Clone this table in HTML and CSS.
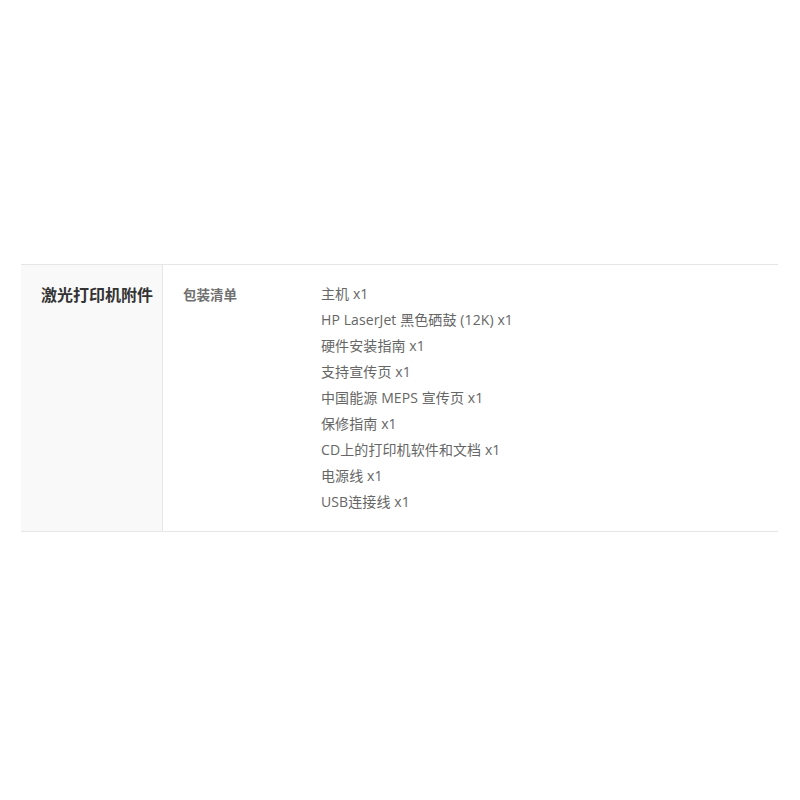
FILE: index.html
```html
<!DOCTYPE html>
<html>
<head>
<meta charset="utf-8">
<link rel="stylesheet" href="styles.css">
</head>
<body>
<div class="spec">
  <div class="group">激光打印机附件</div>
  <div class="body">
    <div class="label">包装清单</div>
    <ul class="items">
      <li>主机 x1</li>
      <li>HP LaserJet 黑色硒鼓 (12K) x1</li>
      <li>硬件安装指南 x1</li>
      <li>支持宣传页 x1</li>
      <li>中国能源 MEPS 宣传页 x1</li>
      <li>保修指南 x1</li>
      <li>CD上的打印机软件和文档 x1</li>
      <li>电源线 x1</li>
      <li>USB连接线 x1</li>
    </ul>
  </div>
</div>
</body>
</html>
```

FILE: styles.css
```css
html, body {
  margin: 0;
  padding: 0;
  background: #fff;
}
body {
  font-family: "Open Sans", "Noto Sans CJK SC", sans-serif;
}
.spec {
  margin: 264px 0 0 21px;
  width: 757px;
  display: flex;
  border-top: 1px solid #e6e6e6;
  border-bottom: 1px solid #e6e6e6;
}
.group {
  width: 121px;
  padding: 16px 0 0 20px;
  background: #f9f9f9;
  border-right: 1px solid #e6e6e6;
  font-family: "Noto Sans CJK SC", sans-serif;
  font-size: 16px;
  font-weight: bold;
  color: #333;
  line-height: 26px;
}
.body {
  display: flex;
  padding: 16px 0 16px 20px;
}
.label {
  width: 138px;
  font-family: "Noto Sans CJK SC", sans-serif;
  font-size: 13.5px;
  font-weight: bold;
  color: #707070;
  line-height: 26px;
}
.items {
  list-style: none;
  margin: 0;
  padding: 0;
  font-size: 14px;
  letter-spacing: 0.1px;
  color: #666;
  line-height: 26px;
}
```
